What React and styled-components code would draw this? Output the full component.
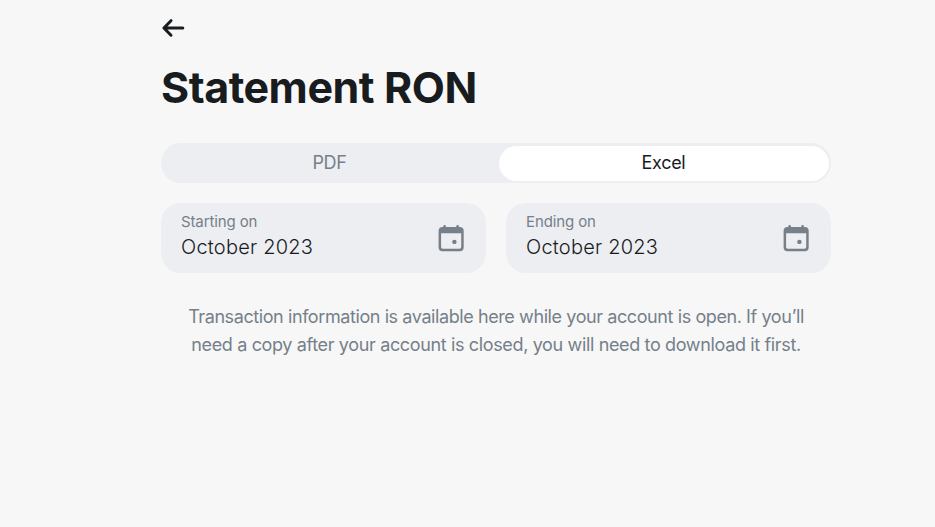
import React from "react";
import styled, { createGlobalStyle } from "styled-components";

const GlobalStyle = createGlobalStyle`
  * { box-sizing: border-box; }
  body {
    margin: 0;
    min-height: 100vh;
    background: #f7f7f7;
    color: #191c1f;
    font-family: Inter, sans-serif;
  }
`;

const Page = styled.main`
  width: 670px;
  margin-left: 161px;
  padding-top: 16px;
`;

const BackButton = styled.button`
  display: flex;
  width: 24px;
  height: 24px;
  padding: 0;
  border: 0;
  background: none;
  color: inherit;
`;

const Title = styled.h1`
  margin: 19px 0 0;
  height: 56px;
  font-size: 43px;
  line-height: 56px;
  font-weight: 700;
  letter-spacing: -0.48px;
  word-spacing: 0.3px;
  white-space: nowrap;
`;

const Tabs = styled.div`
  display: flex;
  gap: 4px;
  height: 40px;
  margin-top: 28px;
  padding: 3px 2.5px 2px 3.5px;
  border-radius: 20px;
  background: #edeef2;
`;

const Tab = styled.button`
  flex: 1;
  padding: 0 0 2px;
  border: 0;
  border-radius: 18px;
  font: 400 18px/33px Inter, sans-serif;
  letter-spacing: -0.3px;
  background: ${(p) => (p.$active ? "#fff" : "transparent")};
  color: ${(p) => (p.$active ? "#191c1f" : "#75808a")};
`;

const Fields = styled.div`
  display: grid;
  grid-template-columns: 1fr 1fr;
  gap: 20px;
  margin-top: 20px;
`;

const Field = styled.div`
  display: flex;
  align-items: center;
  justify-content: space-between;
  height: 70px;
  padding: 0 20px;
  border-radius: 20px;
  background: #edeef2;
  color: #75808a;
`;

const FieldText = styled.div`
  height: 52px;
`;

const Label = styled.div`
  font-size: 15px;
  line-height: 20px;
  letter-spacing: -0.12px;
`;

const Value = styled.div`
  font-size: 20px;
  font-weight: 300;
  line-height: 30px;
  letter-spacing: 0.22px;
  color: #191c1f;
`;

const Note = styled.p`
  margin: 30px 0 0;
  font-size: 18px;
  line-height: 28px;
  text-align: center;
  color: #75808a;
`;

const NoteLine = styled.span`
  display: block;
  letter-spacing: ${(p) => p.$tracking};
`;

function ArrowIcon() {
  return (
    <svg
      width="24"
      height="24"
      viewBox="0 0 24 24"
      fill="none"
      stroke="currentColor"
      strokeWidth="3"
      strokeLinecap="round"
      strokeLinejoin="round"
    >
      <path d="M21.8 12H3.2M10 4.7 2.9 12l7.1 7.2" />
    </svg>
  );
}

function CalendarIcon() {
  return (
    <svg width="30" height="30" viewBox="0 0 30 30" fill="currentColor">
      <path
        fillRule="evenodd"
        d="M7.3 4V3.2a1.3 1.3 0 0 1 2.6 0V4h10.4V3.2a1.3 1.3 0 0 1 2.6 0V4h.9a3.9 3.9 0 0 1 3.9 3.9v16.4a3.9 3.9 0 0 1-3.9 3.9H6.5a3.9 3.9 0 0 1-3.9-3.9V7.9A3.9 3.9 0 0 1 6.5 4zM5.1 10.2v13.9a1.6 1.6 0 0 0 1.6 1.6h16.9a1.6 1.6 0 0 0 1.6-1.6V10.2z"
      />
      <circle cx="18.4" cy="18.9" r="2.2" />
    </svg>
  );
}

function DateField({ label, value }) {
  return (
    <Field>
      <FieldText>
        <Label>{label}</Label>
        <Value>{value}</Value>
      </FieldText>
      <CalendarIcon />
    </Field>
  );
}

export default function App() {
  return (
    <>
      <GlobalStyle />
      <Page>
        <BackButton aria-label="Back"><ArrowIcon /></BackButton>
        <Title>Statement RON</Title>
        <Tabs>
          <Tab>PDF</Tab>
          <Tab $active>Excel</Tab>
        </Tabs>
        <Fields>
          <DateField label="Starting on" value="October 2023" />
          <DateField label="Ending on" value="October 2023" />
        </Fields>
        <Note>
          <NoteLine $tracking="-0.41px">
            Transaction information is available here while your account is open. If you’ll
          </NoteLine>
          <NoteLine $tracking="-0.355px">
            need a copy after your account is closed, you will need to download it first.
          </NoteLine>
        </Note>
      </Page>
    </>
  );
}
